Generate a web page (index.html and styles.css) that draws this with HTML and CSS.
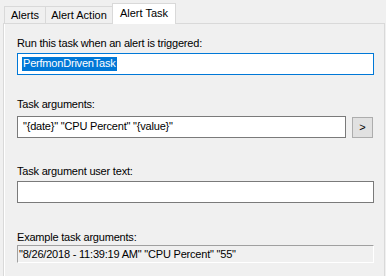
FILE: index.html
```html
<!DOCTYPE html>
<html lang="en">
<head>
  <meta charset="UTF-8">
  <title>Alert Task</title>
  <link rel="stylesheet" href="styles.css">
</head>
<body>
  <div class="tabs">
    <div class="tab tab-alerts">Alerts</div>
    <div class="tab tab-action">Alert Action</div>
    <div class="tab tab-task active">Alert Task</div>
  </div>

  <div class="panel">
    <label class="label first">Run this task when an alert is triggered:</label>
    <div class="field focused"><span class="selected">PerfmonDrivenTask</span></div>

    <label class="label second">Task arguments:</label>
    <div class="arg-row">
      <div class="field args">"{date}" "CPU Percent" "{value}"</div>
      <button class="more">&gt;</button>
    </div>

    <label class="label third">Task argument user text:</label>
    <div class="field"></div>

    <label class="label fourth">Example task arguments:</label>
    <div class="readonly">"8/26/2018 - 11:39:19 AM" "CPU Percent" "55"</div>
  </div>
</body>
</html>
```

FILE: styles.css
```css
html, body {
  margin: 0;
  padding: 0;
  height: 276px;
  overflow: hidden;
}
body {
  font-family: 'Liberation Sans', Arial, sans-serif;
  font-size: 11px;
  line-height: 13px;
  color: #000;
  background: #f0f0f0;
}

/* tab strip */
.tabs {
  display: flex;
  align-items: flex-end;
  height: 23px;
  padding-left: 4px;
}
.tab {
  box-sizing: border-box;
  height: 17px;
  border: 1px solid #d9d9d9;
  border-bottom: none;
  margin-right: -1px;
  background: #f0f0f0;
  text-align: center;
  padding-top: 2px;
}
.tab-alerts { width: 42px; }
.tab-action { width: 68px; }
.tab-task { width: 64px; }
.tab.active {
  height: 21px;
  margin-bottom: -1px;
  background: #fff;
  position: relative;
  z-index: 1;
  padding-top: 3px;
}

/* page */
.panel {
  box-sizing: border-box;
  width: 382px;
  height: 253px;
  margin-left: 3px;
  border: 1px solid #d9d9d9;
  border-bottom: none;
  box-shadow: inset 1px 0 0 #fff;
  padding: 13px 0 0 13px;
  display: flex;
  flex-direction: column;
  align-items: flex-start;
  letter-spacing: -0.2px;
}

.label {
  display: block;
  height: 13px;
}
.label.second { margin-top: 23px; }
.label.third { margin-top: 27px; }
.label.fourth { margin-top: 28px; }

.field {
  box-sizing: border-box;
  width: 357px;
  height: 22px;
  margin-top: 3px;
  border: 1px solid #7a7a7a;
  background: #fff;
  padding: 3px 0 0 5px;
  white-space: nowrap;
}
.field.focused {
  border-color: #0078d7;
  padding: 3px 0 0 4px;
}
.selected {
  display: inline-block;
  height: 14px;
  padding: 0 1px;
  background: #0078d7;
  color: #fff;
}

.arg-row {
  display: flex;
  align-items: center;
  gap: 6px;
  margin-top: 5px;
}
.arg-row .field {
  width: 329px;
  margin-top: 0;
}
.more {
  box-sizing: border-box;
  width: 21px;
  height: 21px;
  padding: 0;
  border: 1px solid #adadad;
  background: #e1e1e1;
  font-family: inherit;
  font-size: 11px;
  color: #000;
}

.readonly {
  box-sizing: border-box;
  width: 357px;
  height: 18px;
  margin-top: 1px;
  border-top: 1px solid #a0a0a0;
  border-left: 1px solid #a0a0a0;
  border-right: 1px solid #fff;
  border-bottom: 1px solid #fff;
  padding: 2px 0 0 1px;
  white-space: nowrap;
}
```
